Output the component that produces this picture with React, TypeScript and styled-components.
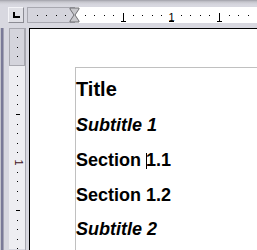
import React from "react";
import styled, { createGlobalStyle } from "styled-components";

const GlobalStyle = createGlobalStyle`
  html, body {
    margin: 0;
    padding: 0;
    background: #d8d8e0;
  }
  body {
    font-family: "Liberation Sans", Arial, sans-serif;
  }
`;

const FRAME = "#d8d8e0";
const PX_INCH = 96;

const Window = styled.div`
  width: 257px;
  height: 250px;
  overflow: hidden;
  display: flex;
  flex-direction: column;
  background: ${FRAME};
`;

const TopRow = styled.div`
  height: 28px;
  flex: none;
  display: flex;
  background: linear-gradient(#9c9ca4 0px, #b8b8c0 1px, #cfcfd6 3px, ${FRAME} 5px);
`;

const CornerCell = styled.div`
  width: 27px;
  flex: none;
  padding: 7px 0 0 8px;
  box-sizing: border-box;
`;

const CornerButton = styled.div`
  width: 16px;
  height: 16px;
  box-sizing: border-box;
  border: 1px solid;
  border-color: #f4f4f8 #8c8c94 #8c8c94 #f4f4f8;
  background: #e0e0e6;
  display: flex;
  align-items: flex-start;
  padding: 4px 0 0 4px;
`;

const TabL = styled.div`
  width: 7px;
  height: 6px;
  border-left: 2px solid #000;
  border-bottom: 2px solid #000;
  box-sizing: border-box;
`;

const HRulerCell = styled.div`
  flex: 1;
  padding-top: 7px;
`;

const BodyRow = styled.div`
  flex: 1;
  display: flex;
  min-height: 0;
`;

const LeftColumn = styled.div`
  width: 29px;
  flex: none;
  display: flex;
  background: linear-gradient(
    to right,
    #c4c4cc 0px,
    #c4c4cc 1px,
    #7a7a98 1px,
    #7a7a98 3px,
    #a4a4b4 3px,
    #a4a4b4 4px,
    ${FRAME} 4px
  );
  padding-left: 9px;
  box-sizing: border-box;
`;

const VRulerBox = styled.div`
  width: 16px;
  border-right: 1px solid #a8a8b0;
`;

const Doc = styled.div`
  flex: 1;
  background: #fff;
  border-top: 1px solid #000;
  border-left: 1px solid #000;
  padding: 38px 0 0 45px;
  overflow: hidden;
`;

const TextArea = styled.div`
  border-top: 1px solid #c0c0c0;
  border-left: 1px solid #c0c0c0;
  padding-top: 4px;
  height: 100%;
  color: #000;
`;

const Para = styled.div<{ $size: number; $lh: number; $italic?: boolean }>`
  font-size: ${(p) => p.$size}px;
  line-height: ${(p) => p.$lh}px;
  height: ${(p) => p.$lh}px;
  font-weight: bold;
  font-style: ${(p) => (p.$italic ? "italic" : "normal")};
  white-space: nowrap;
`;

const Caret = styled.span`
  display: inline-block;
  width: 0;
  height: 16px;
  border-left: 1px solid #000;
  vertical-align: -3px;
  margin-right: -1px;
`;

const marks = (zero: number, from: number, to: number) => {
  const out: { pos: number; kind: "dot" | "half" | "inch"; n: number }[] = [];
  for (let k = -20; k <= 40; k++) {
    const pos = zero + (k * PX_INCH) / 10;
    if (pos < from || pos > to) continue;
    const kind = k % 10 === 0 ? "inch" : k % 5 === 0 ? "half" : "dot";
    out.push({ pos: Math.round(pos), kind, n: k / 10 });
  }
  return out;
};

const HRuler = () => {
  const left = 27;
  const zero = 75;
  const w = 257 - left;
  const items = marks(zero, left + 4, 257);
  const z = zero - left;
  return (
    <svg width={w} height={16} style={{ display: "block" }}>
      <rect x={0} y={0} width={w} height={16} fill="#fff" />
      <rect x={0.5} y={0.5} width={z - 1} height={15} fill="#d4d4dc" stroke="#a8a8b0" />
      {items.map((m) => {
        const x = m.pos - left;
        if (m.kind === "dot") return <rect key={m.pos} x={x} y={8} width={1} height={1} fill="#000" />;
        if (m.kind === "half")
          return (
            <g key={m.pos}>
              <rect x={x} y={6} width={1} height={9} fill="#000" />
              <rect x={x - 2} y={14} width={5} height={1} fill="#000" />
            </g>
          );
        if (m.n === 0) return null;
        return (
          <g key={m.pos}>
            <text x={x + 0.5} y={14} fontSize={11} textAnchor="middle" fill="#000" fontFamily="Liberation Sans, Arial, sans-serif">
              {m.n}
            </text>
            <rect x={x - 2} y={14} width={5} height={1} fill="#000" />
          </g>
        );
      })}
      <polygon
        points={`${z - 5},1 ${z + 4},1 ${z + 4},2 ${z},8 ${z + 4},14 ${z + 4},15 ${z - 5},15 ${z - 5},14 ${z - 1},8 ${z - 5},2`}
        fill="#c8c8cc"
        stroke="#707074"
        strokeWidth={1}
      />
    </svg>
  );
};

const VRuler = () => {
  const top = 29;
  const zero = 67;
  const h = 250 - top;
  const items = marks(zero, top + 4, 250);
  return (
    <svg width={16} height={h} style={{ display: "block" }}>
      <rect x={0} y={0} width={16} height={h} fill="#eeeef2" />
      <rect x={0.5} y={0.5} width={15} height={zero - top - 1} fill="#d4d4dc" stroke="#a8a8b0" />
      {items.map((m) => {
        const y = m.pos - top;
        if (m.kind === "dot") return <rect key={m.pos} x={8} y={y} width={1} height={1} fill="#000" />;
        if (m.kind === "half") return <rect key={m.pos} x={7} y={y} width={4} height={1} fill="#000" />;
        if (m.n === 0) return null;
        return (
          <text
            key={m.pos}
            x={0}
            y={0}
            fontSize={11}
            textAnchor="middle"
            fill="#401020"
            fontFamily="Liberation Sans, Arial, sans-serif"
            transform={`translate(6 ${y + 0.5}) rotate(90)`}
          >
            {m.n}
          </text>
        );
      })}
    </svg>
  );
};

export default function App() {
  return (
    <>
      <GlobalStyle />
      <Window>
        <TopRow>
          <CornerCell>
            <CornerButton>
              <TabL />
            </CornerButton>
          </CornerCell>
          <HRulerCell>
            <HRuler />
          </HRulerCell>
        </TopRow>
        <BodyRow>
          <LeftColumn>
            <VRulerBox>
              <VRuler />
            </VRulerBox>
          </LeftColumn>
          <Doc>
            <TextArea>
              <Para $size={20} $lh={35}>Title</Para>
              <Para $size={18} $lh={36} $italic>Subtitle 1</Para>
              <Para $size={18} $lh={35}>
                Section <Caret />1.1
              </Para>
              <Para $size={18} $lh={34}>Section 1.2</Para>
              <Para $size={18} $lh={35} $italic>Subtitle 2</Para>
            </TextArea>
          </Doc>
        </BodyRow>
      </Window>
    </>
  );
}
